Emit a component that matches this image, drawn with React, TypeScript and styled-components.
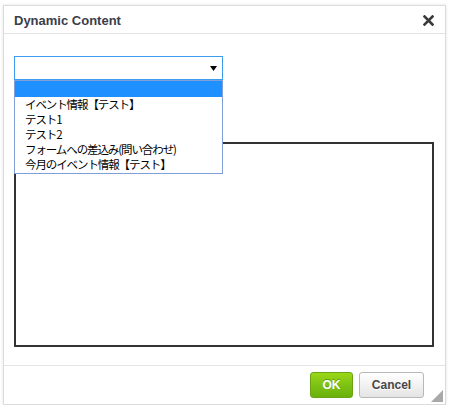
import React from "react";
import styled, { createGlobalStyle } from "styled-components";

const GlobalStyle = createGlobalStyle`
  html, body { margin: 0; padding: 0; background: #ffffff; }
  body { font-family: "Liberation Sans", Arial, sans-serif; font-size: 12px; color: #333; }
`;

const Page = styled.div`
  padding: 5px 0 0 3px;
`;

const Dialog = styled.div`
  position: relative;
  box-sizing: border-box;
  width: 443px;
  height: 400px;
  border: 1px solid #dcdcdc;
  box-shadow: 0 0 3px rgba(0, 0, 0, 0.12);
  background: #fff;
  display: flex;
  flex-direction: column;
`;

const Header = styled.div`
  box-sizing: border-box;
  height: 28px;
  padding: 0 11px 0 10px;
  border-bottom: 1px solid #e3e3e3;
  display: flex;
  align-items: center;
  justify-content: space-between;
`;

const Title = styled.div`
  font-family: "Liberation Sans", Arial, sans-serif;
  font-weight: bold;
  font-size: 13px;
  color: #3b3d4a;
  padding-top: 1px;
`;

const CloseButton = styled.button`
  border: 0;
  background: none;
  padding: 0;
  width: 12px;
  height: 12px;
  display: flex;
  align-items: center;
  justify-content: center;
  cursor: pointer;
  margin-top: 1px;
`;

const Body = styled.div`
  flex: 1;
  padding: 22px 12px 0 10px;
  display: flex;
  flex-direction: column;
`;

const SelectWrap = styled.div`
  position: relative;
  width: 209px;
`;

const SelectBox = styled.div`
  box-sizing: border-box;
  width: 209px;
  height: 24px;
  border: 1px solid #3b9cf0;
  background: #fff;
  display: flex;
  align-items: center;
  justify-content: flex-end;
  padding-right: 5px;
`;

const List = styled.ul`
  position: absolute;
  top: 24px;
  left: 0;
  z-index: 5;
  box-sizing: border-box;
  width: 209px;
  margin: 0;
  padding: 0 0 1px;
  list-style: none;
  background: #fff;
  border: 1px solid #7f9fd6;
`;

const Item = styled.li<{ $active?: boolean }>`
  height: 15px;
  line-height: 15px;
  padding-left: 10px;
  font-family: "Noto Sans CJK JP", "Liberation Sans", sans-serif;
  font-size: 11.5px;
  letter-spacing: -1.1px;
  color: #000;
  background: ${(p) => (p.$active ? "#1e90ff" : "#fff")};
  white-space: nowrap;
  &:first-child { height: 16px; }
`;

const Editor = styled.div`
  box-sizing: border-box;
  margin-top: 62px;
  width: 420px;
  height: 205px;
  border: 2px solid #333;
  background: #fff;
`;

const Footer = styled.div`
  box-sizing: border-box;
  height: 39px;
  border-top: 1px solid #e5e5e5;
  padding: 6px 21px 0 0;
  display: flex;
  justify-content: flex-end;
  align-items: flex-start;
  gap: 6px;
`;

const Button = styled.button<{ $primary?: boolean }>`
  box-sizing: border-box;
  height: 26px;
  min-width: ${(p) => (p.$primary ? "43px" : "65px")};
  padding: 0 10px;
  border-radius: 3px;
  font-family: "Liberation Sans", Arial, sans-serif;
  font-weight: bold;
  font-size: 12px;
  cursor: pointer;
  border: 1px solid ${(p) => (p.$primary ? "#6aa317" : "#b8b8b8")};
  color: ${(p) => (p.$primary ? "#fff" : "#474747")};
  text-shadow: ${(p) => (p.$primary ? "0 -1px 0 #5d9a10" : "0 1px 0 #fff")};
  background: ${(p) =>
    p.$primary
      ? "linear-gradient(to bottom, #9ad717 0%, #7ec214 50%, #69b10b 100%)"
      : "linear-gradient(to bottom, #ffffff 0%, #f2f2f2 50%, #e4e4e4 100%)"};
`;

const Grip = styled.div`
  position: absolute;
  right: 2px;
  bottom: 2px;
  width: 12px;
  height: 12px;
`;

const options = [
  "",
  "イベント情報【テスト】",
  "テスト1",
  "テスト2",
  "フォームへの差込み(問い合わせ)",
  "今月のイベント情報【テスト】",
];

export default function App() {
  return (
    <>
      <GlobalStyle />
      <Page>
        <Dialog>
          <Header>
            <Title>Dynamic Content</Title>
            <CloseButton aria-label="Close">
              <svg width="11" height="11" viewBox="0 0 11 11">
                <path d="M1.5 1.5 L9.5 9.5 M9.5 1.5 L1.5 9.5" stroke="#3a3a3a" strokeWidth="2.6" strokeLinecap="square" />
              </svg>
            </CloseButton>
          </Header>
          <Body>
            <SelectWrap>
              <SelectBox>
                <svg width="7" height="5" viewBox="0 0 7 5">
                  <polygon points="0,0 7,0 3.5,5" fill="#000" />
                </svg>
              </SelectBox>
              <List>
                {options.map((o, i) => (
                  <Item key={i} $active={i === 0}>
                    {o}
                  </Item>
                ))}
              </List>
            </SelectWrap>
            <Editor />
          </Body>
          <Footer>
            <Button $primary>OK</Button>
            <Button>Cancel</Button>
          </Footer>
          <Grip>
            <svg width="12" height="12" viewBox="0 0 12 12">
              <polygon points="12,0 12,12 0,12" fill="#a9a9a9" />
            </svg>
          </Grip>
        </Dialog>
      </Page>
    </>
  );
}
